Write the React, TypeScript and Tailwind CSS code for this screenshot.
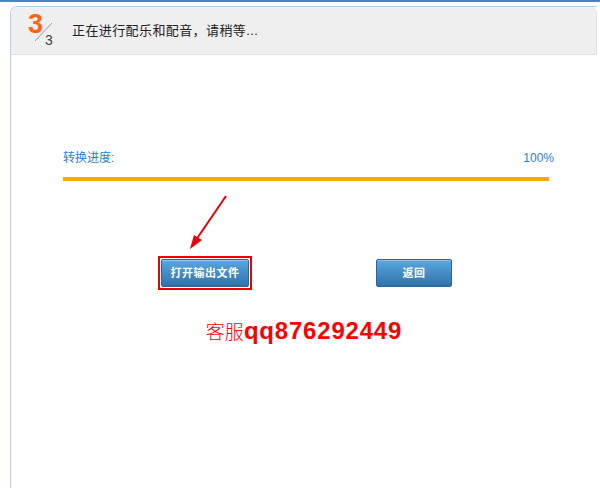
import React from 'react';

const sans = '"Liberation Sans", "Noto Sans CJK SC", sans-serif';

const StepBadge: React.FC = () => (
  <div className="relative w-[61px] h-full shrink-0">
    <span className="absolute left-[17px] top-[0px] text-[27px] leading-[34px] font-bold text-[#ff6414]">3</span>
    <svg className="absolute left-[23px] top-[14px]" width="22" height="22" viewBox="0 0 22 22">
      <line x1="1" y1="20" x2="18" y2="2" stroke="#9a9a9a" strokeWidth="1" />
    </svg>
    <span className="absolute left-[34px] top-[24px] text-[14px] leading-[18px] text-[#444]">3</span>
  </div>
);

const BlueButton: React.FC<{ label: string; width: string }> = ({ label, width }) => (
  <button
    className={`${width} h-[28px] rounded-[2px] border border-[#2d6396] bg-gradient-to-b from-[#5aa8e0] to-[#2f72ab] text-white text-[11px] font-bold tracking-[0.5px] shadow-[inset_0_1px_0_rgba(255,255,255,0.35)]`}
  >
    {label}
  </button>
);

const App: React.FC = () => {
  return (
    <div className="relative w-[600px] h-[490px] bg-white overflow-hidden" style={{ fontFamily: sans }}>
      <div className="h-[2px] bg-[#4684c4]" />

      <div className="ml-[10px] mt-[4px] mr-[3px] h-[482px] border-l border-t border-[#b9cfe6] rounded-tl-[7px]">
        {/* header */}
        <div className="h-[48px] flex items-center bg-[#efefef] rounded-tl-[6px] rounded-tr-[6px] border-r border-b border-[#e2e2e2]">
          <StepBadge />
          <span className="text-[13px] text-[#222] tracking-[0.4px]">正在进行配乐和配音，请稍等...</span>
        </div>

        {/* body */}
        <div className="pl-[52px] pr-[43px] pt-[95px]">
          <div className="flex justify-between items-center h-[16px] text-[12px] text-[#2b7fd0]">
            <span>转换进度:</span>
            <span>100%</span>
          </div>
          <div className="mt-[11px] h-[4px] w-[486px] bg-[#ffa800]" />

          <div className="flex items-center mt-[75px]">
            <div className="ml-[95px] border-2 border-[#ee0000] p-[1px]">
              <BlueButton label="打开输出文件" width="w-[88px]" />
            </div>
            <div className="ml-[124px]">
              <BlueButton label="返回" width="w-[76px]" />
            </div>
          </div>
        </div>

        <div className="mt-[23px] flex justify-center items-baseline text-[#ff0000]">
          <span className="text-[19px] font-light" style={{ fontFamily: '"Noto Sans CJK SC", serif' }}>客服</span>
          <span className="text-[24px] font-bold tracking-[0.8px]">qq876292449</span>
        </div>
      </div>

      {/* pointer arrow */}
      <svg className="absolute left-0 top-0 pointer-events-none" width="600" height="490">
        <line x1="226" y1="196" x2="196" y2="240" stroke="#ee0000" strokeWidth="2" />
        <polygon points="190,249 202,240 194,235" fill="#ee0000" />
      </svg>
    </div>
  );
};

export default App;
